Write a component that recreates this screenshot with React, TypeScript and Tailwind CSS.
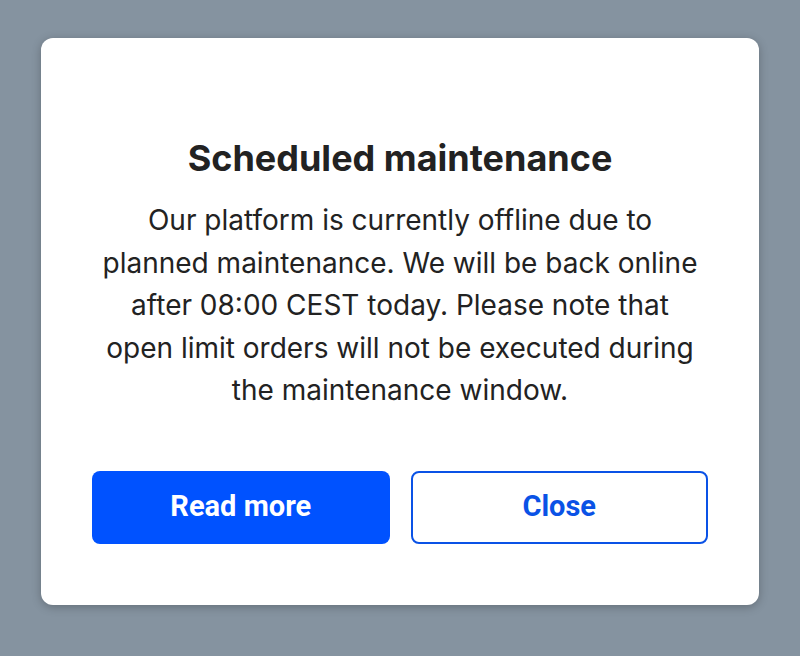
export default function App() {
  return (
    <div className="min-h-screen w-full bg-[#8593a0] pt-[38px] font-['Inter',sans-serif]">
      <div className="mx-auto w-[718px] h-[567px] rounded-[12px] bg-white shadow-[0_2px_10px_rgba(0,0,0,0.25)] px-[51px] pt-[98px]">
        <h1 className="text-center text-[36px] leading-[44px] font-bold text-[#222222]">
          Scheduled maintenance
        </h1>
        <p className="mx-auto mt-[19px] w-[604px] text-center text-[28px] leading-[42.5px] text-[#222222]">
          Our platform is currently offline due to planned maintenance. We will be back online after 08:00 CEST today. Please note that open limit orders will not be executed during the maintenance window.
        </p>
        <div className="mt-[59px] grid grid-cols-2 gap-[21px] font-['Roboto',sans-serif]">
          <button className="h-[73px] rounded-[8px] bg-[#0052ff] text-[29px] font-bold text-white">
            Read more
          </button>
          <button className="h-[73px] rounded-[8px] border-2 border-[#0a52e6] bg-white text-[29px] font-bold text-[#0a52e6]">
            Close
          </button>
        </div>
      </div>
    </div>
  );
}
